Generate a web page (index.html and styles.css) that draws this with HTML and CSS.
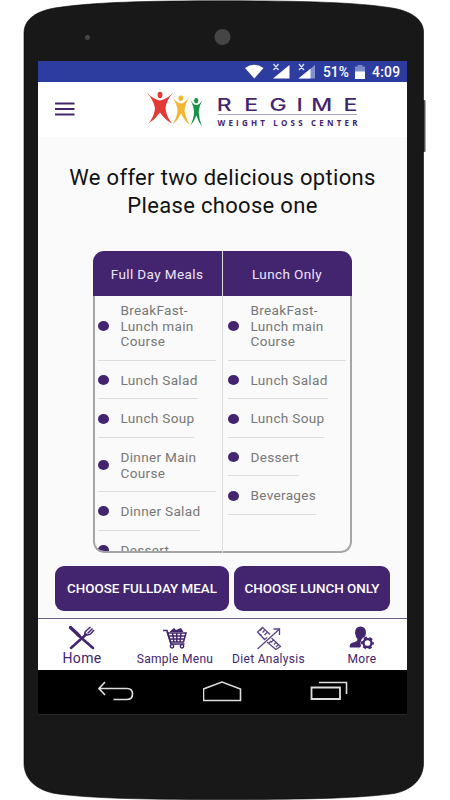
FILE: index.html
```html
<!DOCTYPE html>
<html lang="en">
<head>
    <meta charset="UTF-8">
    <meta name="viewport" content="width=device-width, initial-scale=1.0">
    <title>Regime Weight Loss Center</title>
    <link rel="stylesheet" href="styles.css">
</head>
<body>
    <div class="phone">
        <!-- phone body, camera and side button -->
        <svg class="phone-body" width="450" height="800" viewBox="0 0 450 800">
            <rect x="421" y="100" width="4.500" height="52" rx="1" fill="#555"/>
            <path d="M24 33C24 20 35 12 52 8.500C90 2 150 .8 224 .8C298 .8 358 2 395 8.500C412 12 423.500 20 423.500 32V763C423.500 779 412 790 394 793.500C355 799 290 799.500 224 799.500C158 799.500 93 799 55 793.500C36 790 24 779 24 763Z" fill="#181818" stroke="#050505" stroke-width=".6"/>
            <circle cx="87.500" cy="37.500" r="2.500" fill="#454545"/>
            <circle cx="222.500" cy="37" r="8" fill="#454545"/>
        </svg>

        <div class="screen">
            <div class="status-bar">
                <svg width="88" height="21" viewBox="0 0 88 21">
                    <path d="M0 7Q9 .5 18.500 7L9.300 17.500Z" fill="#fff"/>
                    <path d="M28 17.500H44.500V4Z" fill="#fff"/>
                    <path d="M53.500 17.500H70V4Z" fill="#8290cf"/>
                    <path d="M53.500 17.500H65.500V7.700Z" fill="#fff"/>
                    <path d="M28.500 3L33.500 9M33.500 3L28.500 9M54 3L59 9M59 3L54 9" stroke="#dde2ff" stroke-width="1.300"/>
                </svg>
                <span class="battery-text">51%</span>
                <svg class="battery" width="10" height="14" viewBox="0 0 11 14" preserveAspectRatio="none">
                    <path d="M3 0H8V1.500H11V7H0V1.500H3Z" fill="#7d8bcb"/>
                    <path d="M0 6.500H11V14H0Z" fill="#fff"/>
                </svg>
                <span class="clock">4:09</span>
            </div>

            <div class="header">
                <svg class="menu-icon" width="20" height="14" viewBox="0 0 20 14">
                    <path d="M0 1.500H19.500M0 7H19.500M0 12.500H19.500" stroke="#42246f" stroke-width="1.900"/>
                </svg>
                <svg class="logo" width="214" height="40" viewBox="146 88 214 40">
                    <g fill="#e23b35">
                        <ellipse cx="160" cy="95" rx="2.400" ry="3.300"/>
                        <path d="M147 93Q153 99 160 100.500Q167 99 173 93Q166.500 100 165.500 108Q166 116 172 123.500Q165 120 160 112.500Q155.500 119 148.500 123.500Q154.500 116 155 108Q153.500 100 147 93Z"/>
                    </g>
                    <g fill="#f3b632">
                        <ellipse cx="180.800" cy="98.300" rx="2.400" ry="2.700"/>
                        <path d="M172 97Q177 103 181 103.500Q185 103 189.500 97Q185 104 184.500 110.500Q185.500 118 190 125Q184.500 121 181 113.500Q178 120 172.500 124.500Q177.500 116 177.500 110Q177 104 172 97Z"/>
                    </g>
                    <g fill="#199447">
                        <ellipse cx="196.200" cy="100.600" rx="2.100" ry="2.700"/>
                        <path d="M190 99.500Q193.500 105 196.200 105Q199.500 105 202.500 100Q199 106 198.700 112Q199 119 202 126.500Q198.500 122 196.300 115.500Q194.500 121 190.500 125.500Q194 118 194 112Q193.800 106 190 99.500Z"/>
                    </g>
                    <g transform="scale(1.350 1)">
                        <text class="logo-name" x="160.500 181 199.600 219.700 230.600 254.500" y="111.500">REGIME</text>
                    </g>
                    <path d="M218 114.500H357" stroke="#aaa3bd" stroke-width="1"/>
                    <text class="logo-sub" x="217.500" y="126" textLength="140">WEIGHT LOSS CENTER</text>
                </svg>
            </div>

            <div class="content">
                <h1>We offer two delicious options<br>Please choose one</h1>

                <div class="plans">
                    <div class="plan">
                        <h2>Full Day Meals</h2>
                        <ul>
                            <li class="wrap">BreakFast-<br>Lunch main<br>Course</li>
                            <li>Lunch Salad</li>
                            <li>Lunch Soup</li>
                            <li class="wrap">Dinner Main<br>Course</li>
                            <li>Dinner Salad</li>
                            <li>Dessert</li>
                        </ul>
                    </div>
                    <div class="plan">
                        <h2>Lunch Only</h2>
                        <ul>
                            <li class="wrap">BreakFast-<br>Lunch main<br>Course</li>
                            <li>Lunch Salad</li>
                            <li>Lunch Soup</li>
                            <li>Dessert</li>
                            <li>Beverages</li>
                        </ul>
                    </div>
                </div>

                <div class="actions">
                    <button class="btn btn-full">CHOOSE FULLDAY MEAL</button>
                    <button class="btn btn-lunch">CHOOSE LUNCH ONLY</button>
                </div>
            </div>

            <div class="tabs">
                <a class="tab active">
                    <svg width="26" height="24" viewBox="0 0 26 24" fill="none" stroke="#42246f">
                        <path d="M1.500 1.500L10 9.500" stroke-width="3.400" stroke-linecap="round"/>
                        <path d="M9 9L24 22" stroke-width="2.600" stroke-linecap="round"/>
                        <path d="M2 22L17 8.500" stroke-width="2.500" stroke-linecap="round"/>
                        <path d="M16 9Q15 6 18 4L21.500 1M17 9Q20 9.500 22 7.500L25 4M18.500 7.500L23.500 2.500" stroke-width="1.500"/>
                    </svg>
                    <span>Home</span>
                </a>
                <a class="tab">
                    <svg width="26" height="24" viewBox="0 0 26 24" fill="none" stroke="#42246f">
                        <path d="M1 4.500H5L9 18H22.500" stroke-width="1.600"/>
                        <path d="M8 5.500L12 2L14 4L19 2L21.500 6H8Z" fill="#42246f" stroke="none"/>
                        <path d="M5.500 7H24L21.500 16H8.500ZM6.500 10H23M7.500 13H22M10.500 7L12 16M14.800 7V16M19 7L18 16" stroke-width="1.500"/>
                        <circle cx="10" cy="20.300" r="1.700" stroke-width="1.400"/>
                        <circle cx="20" cy="20.300" r="1.700" stroke-width="1.400"/>
                    </svg>
                    <span>Sample Menu</span>
                </a>
                <a class="tab">
                    <svg width="26" height="24" viewBox="0 0 26 24" fill="none" stroke="#5c4681" stroke-width="1.300">
                        <path d="M1.500 23L23 3.500M17.500 3H23.500V9"/>
                        <path d="M11 11.500L8.500 13.500L1.500 6L6.500 1.500L14 8.500M6 2.500L4 4.500M8.500 4.500L6.500 6.500M11 6.500L8.500 9M2.500 7L5.500 9.500"/>
                        <path d="M15.500 12L24.500 20.500L20 23.500L11 16M17.500 14L15 16.500M20 16.500L18 18.500M22.500 18.500L20 21M12.500 17.500L15 15"/>
                    </svg>
                    <span>Diet Analysis</span>
                </a>
                <a class="tab">
                    <svg width="26" height="24" viewBox="0 0 26 24">
                        <path d="M6 7Q6 .5 11.500 .5Q17 .5 17 7Q16.500 11 14.500 13V16L11 21.500H.8Q0 17.500 4 16.500Q8.500 15.500 8.500 13Q6.500 11 6 7Z" fill="#42246f"/>
                        <circle cx="18.500" cy="17" r="7" fill="#fff"/>
                        <circle cx="18.500" cy="17" r="5.500" fill="none" stroke="#42246f" stroke-width="1.900" stroke-dasharray="3.200 2.560" stroke-dashoffset="1.600"/>
                        <circle cx="18.500" cy="17" r="4" fill="none" stroke="#42246f" stroke-width="2.300"/>
                    </svg>
                    <span>More</span>
                </a>
            </div>

            <div class="android-nav">
                <svg width="38" height="24" viewBox="0 0 38 24">
                    <path d="M8 2L2 8.500L8 15M2 8.500H30Q35.500 8.500 35.500 14Q35.500 19.500 30 19.500H16.500" fill="none" stroke="#ddd" stroke-width="1.700"/>
                </svg>
                <svg width="40" height="24" viewBox="0 0 40 24">
                    <path d="M.5 20.500V9L19 2L37.500 9V20.500Z" fill="none" stroke="#ddd" stroke-width="1.600"/>
                </svg>
                <svg width="38" height="24" viewBox="0 0 38 24">
                    <path d="M1.500 7.500H30V19H1.500Z" fill="none" stroke="#ddd" stroke-width="1.800"/>
                    <path d="M9 2.500H36.500V14" fill="none" stroke="#ddd" stroke-width="1.600"/>
                </svg>
            </div>
        </div>
    </div>
</body>
</html>
```
FILE: styles.css
```css
* {
    box-sizing: border-box;
    margin: 0;
    padding: 0;
}

body {
    font-family: Roboto, "Liberation Sans", sans-serif;
    background: #fff;
    overflow: hidden;
}

.phone {
    position: relative;
    width: 450px;
    height: 800px;
    padding: 61px 43px 0 38px;
}

.phone-body {
    position: absolute;
    left: 0;
    top: 0;
    z-index: -1;
}

.screen {
    display: flex;
    flex-direction: column;
    height: 654px;
    background: #fafafa;
    border-bottom: 1px solid #262626;
}

/* Status bar */
.status-bar {
    display: flex;
    align-items: center;
    height: 21px;
    padding-left: 207px;
    background: #2d3d9f;
    color: #fff;
    font-size: 13.8px;
    font-weight: 500;
    white-space: nowrap;
}

.status-bar svg {
    flex: none;
}

.status-bar .battery-text {
    width: 32px;
    margin-left: -10px;
}

.clock {
    margin-left: 7px;
    letter-spacing: 0.3px;
}

/* Header */
.header {
    display: flex;
    height: 55px;
    padding: 6px 0 0 17px;
    background: #fff;
}

.menu-icon {
    margin-top: 14px;
}

.logo {
    margin-left: 71px;
}

.logo-name {
    font-family: Inter, sans-serif;
    font-size: 17px;
    font-weight: 500;
    fill: #42246f;
}

.logo-sub {
    font-family: "Open Sans", sans-serif;
    font-size: 8px;
    font-weight: 700;
    fill: #42246f;
}

/* Content */
.content {
    height: 481px;
    padding-top: 27px;
}

h1 {
    font-size: 22px;
    font-weight: 400;
    line-height: 28px;
    letter-spacing: 0.32px;
    text-align: center;
    color: #111;
}

/* Plan table */
.plans {
    display: grid;
    grid-template-columns: 129px 1fr;
    width: 259px;
    height: 302px;
    margin: 31px 0 0 54.5px;
    border-radius: 11px;
    overflow: hidden;
}

.plan {
    display: flex;
    flex-direction: column;
    height: 302px;
}

.plan + .plan {
    border-left: 1px solid #ddd;
}

.plan h2 {
    flex: none;
    height: 45px;
    background: #42246f;
    color: #eee5fa;
    font-size: 13.5px;
    font-weight: 400;
    line-height: 46px;
    letter-spacing: 0.4px;
    text-align: center;
}

.plan ul {
    flex: 1;
    display: flex;
    flex-direction: column;
    align-items: flex-start;
    min-height: 0;
    list-style: none;
    padding: 0 0 0 3px;
    border-left: 2px solid #a5a5a5;
    border-bottom: 2px solid #a5a5a5;
    border-bottom-left-radius: 11px;
    overflow: hidden;
}

.plan + .plan ul {
    padding-left: 5px;
    border-left: 0;
    border-right: 2px solid #a5a5a5;
    border-radius: 0 0 11px 0;
}

.plan li {
    display: flex;
    flex: none;
    position: relative;
    padding: 12px 0 9.8px 23px;
    border-bottom: 1px solid #ddd;
    color: #777;
    font-size: 13.6px;
    line-height: 15.7px;
    letter-spacing: 0.3px;
    white-space: nowrap;
}

.plan li:first-child {
    padding-top: 7px;
}

.plan li.wrap {
    width: 118px;
}

.plan li::before {
    content: "";
    position: absolute;
    left: 0;
    top: calc(50% - 4.5px);
    width: 11px;
    height: 10px;
    border-radius: 50%;
    background: #42246f;
}

.plan li:first-child::before {
    top: calc(50% - 7px);
}

.actions {
    display: flex;
    gap: 5px;
    margin: 13px 0 0 17px;
}

.btn {
    height: 45px;
    border: 0;
    border-radius: 9px;
    background: #42246f;
    color: #fff;
    font-family: inherit;
    font-size: 13.4px;
    font-weight: 500;
    white-space: nowrap;
}

.btn-full {
    width: 174px;
}

.btn-lunch {
    width: 156px;
}

/* Bottom tabs */
.tabs {
    display: grid;
    grid-template-columns: 88px 98px 89px 98px;
    height: 52px;
    border-top: 1px solid #6b5d85;
    background: #fff;
}

.tab {
    display: flex;
    flex-direction: column;
    align-items: center;
    padding-top: 7px;
    color: #42246f;
    font-size: 12px;
    line-height: 18px;
    letter-spacing: 0.3px;
    white-space: nowrap;
}

.tab.active {
    font-size: 14px;
    line-height: 17px;
}

/* System navigation */
.android-nav {
    display: flex;
    justify-content: space-between;
    align-items: flex-start;
    height: 44px;
    padding: 10px 59px 0;
    background: #000;
}
```
